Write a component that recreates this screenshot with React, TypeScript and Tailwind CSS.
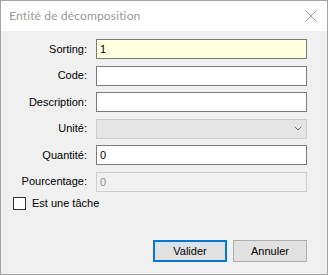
const Field = ({
  label,
  children,
}: {
  label: string;
  children: React.ReactNode;
}) => (
  <div className="flex h-[20px] items-center">
    <div className="w-[86px] text-right text-[11px] text-black leading-none">{label}</div>
    <div className="ml-[9px] h-full w-[211px]">{children}</div>
  </div>
);

const App = () => {
  return (
    <div className="w-[328px] h-[275px] bg-[#f0f0f0] border border-[#a3a3a3] flex flex-col font-['Liberation_Sans',Arial,sans-serif] select-none">
      {/* title bar */}
      <div className="h-[30px] bg-white flex items-center justify-between pl-[8px] pr-[10px]">
        <span className="text-[12px] text-[#999999] font-['Lato',sans-serif] tracking-[0.15px]">
          Entité de décomposition
        </span>
        <svg width="12" height="12" viewBox="0 0 12 12" className="mr-[0px]">
          <path d="M0.5 0.5 L11.5 11.5 M11.5 0.5 L0.5 11.5" stroke="#9a9a9a" strokeWidth="1" fill="none" />
        </svg>
      </div>

      <div className="flex-1 flex flex-col pt-[8px]">
        <div className="flex flex-col gap-[6.5px]">
          <Field label="Sorting:">
            <div className="h-full border border-[#7a7a7a] bg-[#ffffe1] text-[11px] leading-[18px] pl-[3px]">1</div>
          </Field>
          <Field label="Code:">
            <div className="h-full border border-[#7a7a7a] bg-white" />
          </Field>
          <Field label="Description:">
            <div className="h-full border border-[#7a7a7a] bg-white" />
          </Field>
          <Field label="Unité:">
            <div className="h-full border border-[#cccccc] bg-[#e5e5e5] flex items-center justify-end pr-[4px]">
              <svg width="8" height="5" viewBox="0 0 8 5">
                <path d="M0.5 0.5 L4 4 L7.5 0.5" stroke="#6d6d6d" strokeWidth="1" fill="none" />
              </svg>
            </div>
          </Field>
          <Field label="Quantité:">
            <div className="h-full border border-[#7a7a7a] bg-white text-[11px] leading-[18px] pl-[3px]">0</div>
          </Field>
          <Field label="Pourcentage:">
            <div className="h-full border border-[#cccccc] bg-[#f0f0f0] text-[11px] text-[#8d8d8d] leading-[18px] pl-[3px]">0</div>
          </Field>
        </div>

        <div className="flex items-center mt-[5px] pl-[12px] h-[14px]">
          <div className="w-[13px] h-[13px] border border-[#333333] bg-white" />
          <span className="ml-[6px] text-[11px] text-black leading-none">Est une tâche</span>
        </div>

        <div className="flex-1" />

        <div className="flex justify-end gap-[6px] pr-[20px] pb-[12px]">
          <button className="w-[74px] h-[22px] border-2 border-[#0078d7] bg-[#e1e1e1] text-[11px] text-black leading-none">
            Valider
          </button>
          <button className="w-[74px] h-[22px] border border-[#adadad] bg-[#e1e1e1] text-[11px] text-black leading-none">
            Annuler
          </button>
        </div>
      </div>
    </div>
  );
};

export default App;
